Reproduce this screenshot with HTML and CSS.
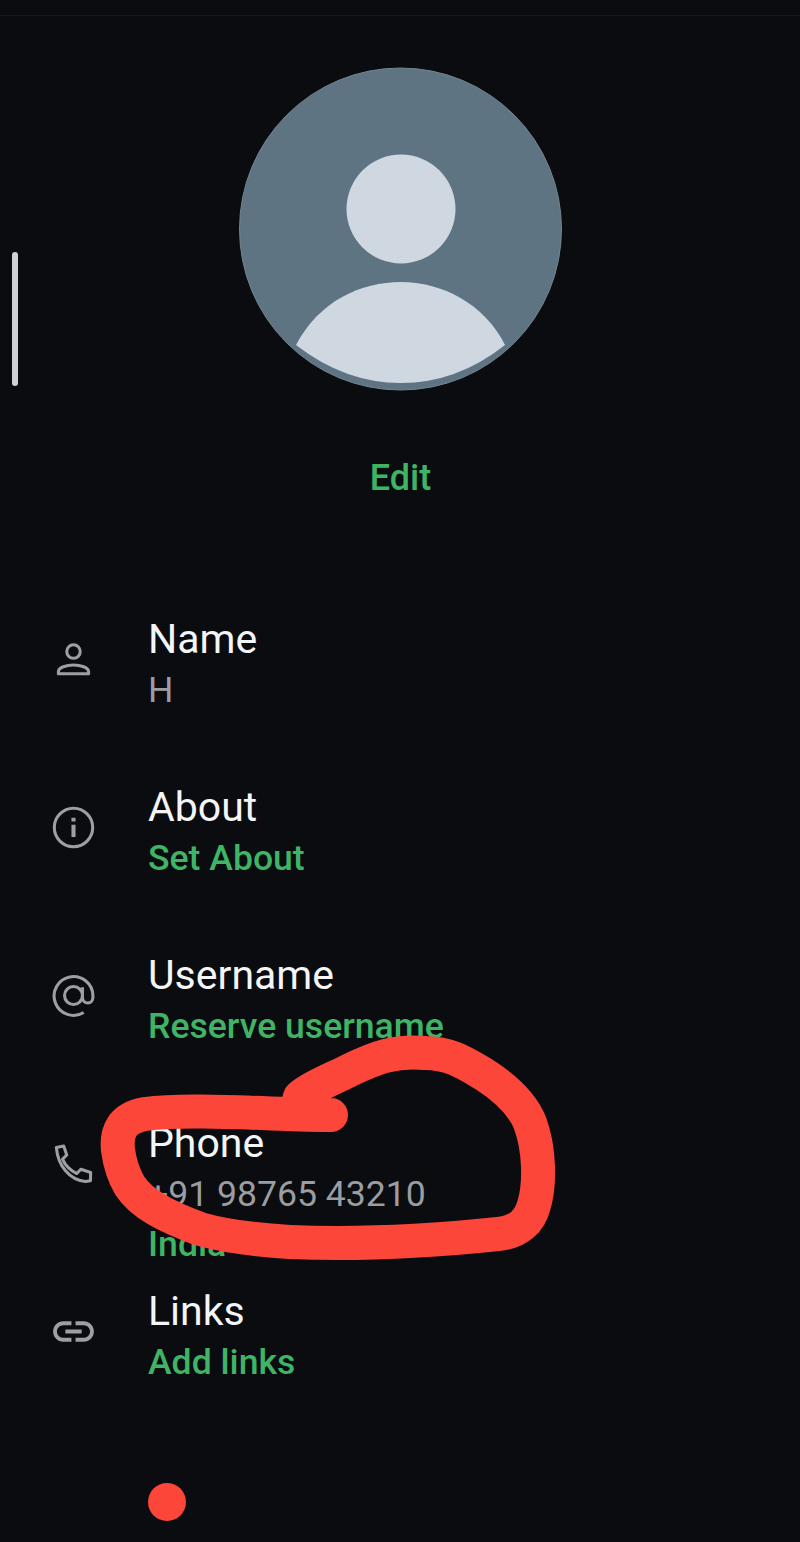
FILE: index.html
```html
<!DOCTYPE html>
<html lang="en">
<head>
  <meta charset="UTF-8">
  <meta name="viewport" content="width=device-width, initial-scale=1.0">
  <title>Profile</title>
  <link rel="stylesheet" href="styles.css">
</head>
<body>
  <div class="page">
    <div class="top-line"></div>
    <div class="scroll-handle"></div>

    <!-- Avatar -->
    <div class="avatar-block">
      <svg class="avatar" viewBox="0 0 324 324">
        <circle cx="161.5" cy="162" r="161" fill="#5f7482" stroke="#74858f" stroke-width="1"/>
        <circle cx="162" cy="142" r="54.5" fill="#cfd8e1"/>
        <path d="M57 278 C80 234 122 215 162 215 C202 215 245 236 266 278 Q218 316 162 316 Q106 316 57 278 Z" fill="#cfd8e1"/>
      </svg>
      <a class="edit" href="#">Edit</a>
    </div>

    <!-- Profile rows -->
    <div class="rows">
      <div class="row">
        <svg class="icon" viewBox="0 0 24 24">
          <circle cx="12" cy="8.1" r="3.3" class="line"/>
          <path d="M4.6 19 v-1 c0-2.2 4-3.3 7.4-3.3 s7.4 1.1 7.4 3.3 v1 Z" class="line"/>
        </svg>
        <div class="text">
          <div class="title">Name</div>
          <div class="value">H</div>
        </div>
      </div>
      <div class="row">
        <svg class="icon" viewBox="0 0 24 24">
          <circle cx="12" cy="12" r="9.4" class="line"/>
          <path d="M11 7.2h2v1.9h-2zm0 3.4h2v6h-2z" class="solid"/>
        </svg>
        <div class="text">
          <div class="title">About</div>
          <div class="link">Set About</div>
        </div>
      </div>
      <div class="row">
        <svg class="icon" viewBox="0 0 24 24">
          <circle cx="12" cy="12" r="4.4" class="line"/>
          <path class="line" d="M17 20.3 A9.5 9.5 0 1 1 21.5 12 v1 c0 1.6-1.1 2.7-2.5 2.7 s-2.6-1.1-2.6-2.7 V8"/>
        </svg>
        <div class="text">
          <div class="title">Username</div>
          <div class="link">Reserve username</div>
        </div>
      </div>
      <div class="row">
        <svg class="icon" viewBox="0 0 24 24">
          <path class="line" d="M3.6 4.2 L7.2 3.4 L8.7 7.8 L6.6 9.9 C7.9 12.8 10.6 15.5 13.6 16.9 L15.6 14.8 L20.4 16.4 L20.3 20.4 L17.9 20.8 C10 20.2 4.4 13 3.6 4.2 Z"/>
        </svg>
        <div class="text">
          <div class="title">Phone</div>
          <div class="value">+91 98765 43210</div>
          <div class="link">India</div>
        </div>
      </div>
      <div class="row">
        <svg class="icon" viewBox="0 0 24 24">
          <path class="solid" d="M3.9 12c0-1.71 1.39-3.1 3.1-3.1h4V7H7c-2.76 0-5 2.24-5 5s2.24 5 5 5h4v-1.9H7c-1.71 0-3.1-1.39-3.1-3.1zM8 13h8v-2H8v2zm9-6h-4v1.9h4c1.71 0 3.1 1.39 3.1 3.1s-1.39 3.1-3.1 3.1h-4V17h4c2.76 0 5-2.24 5-5s-2.24-5-5-5z"/>
        </svg>
        <div class="text">
          <div class="title">Links</div>
          <div class="link">Add links</div>
        </div>
      </div>
    </div>

    <div class="dot"></div>

    <!-- Red marker scribble over the phone row -->
    <svg class="scribble" viewBox="0 0 800 1542">
      <path d="M331 1115 C280 1115 190 1108 145 1114 C122 1118 116 1132 118 1150 C120 1165 124 1176 130 1186 C142 1204 165 1216 200 1229 C225 1236 255 1240 290 1242 C360 1245 440 1240 498 1234 C520 1232 530 1220 534 1205 C540 1185 540 1150 530 1123 C522 1103 505 1088 485 1075 C465 1063 450 1053 425 1053 C395 1050 375 1058 350 1070 C330 1080 310 1088 300 1097 L296 1112"/>
    </svg>
  </div>
</body>
</html>
```

FILE: styles.css
```css
/* General Styles */
body {
  margin: 0;
  background-color: #0a0c10;
  font-family: 'Roboto', sans-serif;
}

.page {
  position: relative;
  height: 1542px;
  padding-top: 67px;
  box-sizing: border-box;
  overflow: hidden;
}

.top-line {
  position: absolute;
  top: 15px;
  left: 0;
  right: 0;
  height: 1px;
  background-color: #14171b;
}

.scroll-handle {
  position: absolute;
  left: 12px;
  top: 252px;
  width: 6px;
  height: 134px;
  border-radius: 3px;
  background-color: #cfd1d5;
}

/* Avatar */
.avatar-block {
  display: flex;
  flex-direction: column;
  align-items: center;
}

.avatar {
  display: block;
  width: 324px;
  height: 324px;
  margin-left: 1px;
}

.edit {
  margin-top: 65px;
  margin-left: 1px;
  color: #3fb465;
  font-size: 36px;
  font-weight: 500;
  line-height: 44px;
  text-decoration: none;
}

/* Profile rows */
.rows {
  margin-top: 114px;
}

.row {
  display: flex;
  gap: 50px;
  height: 168px;
  padding-left: 49px;
}

.icon {
  flex: none;
  width: 49px;
  height: 49px;
  margin-top: 21px;
}

.icon .line {
  fill: none;
  stroke: #9c9fa3;
  stroke-width: 1.5;
  stroke-linejoin: round;
}

.icon .solid {
  fill: #9c9fa3;
}

.title {
  color: #f4f5f6;
  font-size: 41px;
  line-height: 51px;
}

.value {
  color: #9a9da2;
  font-size: 35.6px;
  line-height: 50px;
}

.link {
  color: #3fb465;
  font-size: 35.6px;
  font-weight: 500;
  line-height: 50px;
}

.dot {
  position: absolute;
  left: 148px;
  top: 1483px;
  width: 38px;
  height: 38px;
  border-radius: 50%;
  background-color: #fb4639;
}

.scribble {
  position: absolute;
  top: 0;
  left: 0;
  width: 800px;
  height: 1542px;
  pointer-events: none;
}

.scribble path {
  fill: none;
  stroke: #fb4639;
  stroke-width: 34;
  stroke-linecap: round;
  stroke-linejoin: round;
}
```
